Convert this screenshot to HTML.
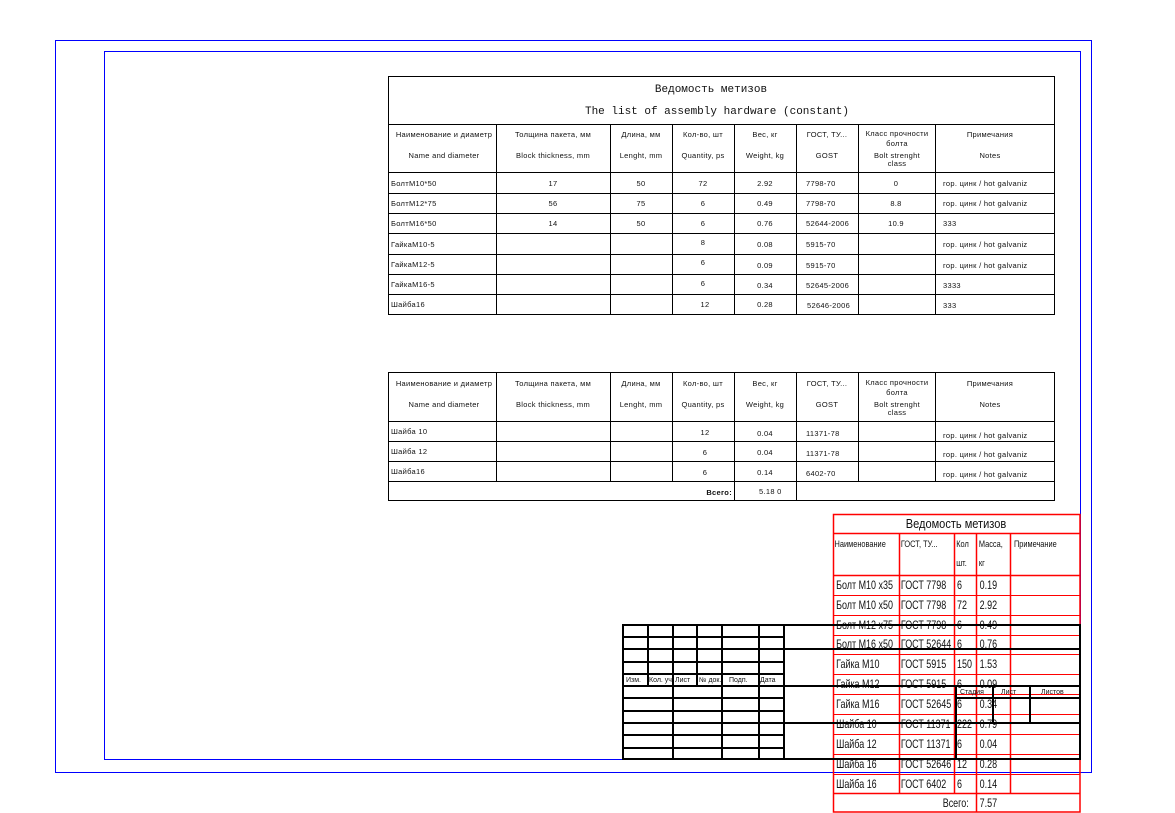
<!DOCTYPE html>
<html><head><meta charset="utf-8"><style>
html,body{margin:0;padding:0;background:#fff;}
svg{display:block}
text{font-family:"Liberation Sans","DejaVu Sans",sans-serif;}
.s{font-size:7.5px;fill:#111;letter-spacing:0.3px}
.r{font-size:10.5px;fill:#111}
.m{font-family:"Liberation Mono",monospace;font-size:11px;fill:#111}
</style></head><body>
<svg width="1175" height="813" viewBox="0 0 1175 813" xmlns="http://www.w3.org/2000/svg">
<rect x="0" y="0" width="1175" height="813" fill="#fff"/>
<rect x="55.5" y="40.5" width="1036" height="732" fill="none" stroke="#0000ff" stroke-width="1"/>
<rect x="104.5" y="51.5" width="976" height="708" fill="none" stroke="#0000ff" stroke-width="1"/>

<g stroke="#000" stroke-width="1" fill="none">
<rect x="388.5" y="76.5" width="666" height="238"/>
<line x1="388" y1="124.5" x2="1055" y2="124.5"/>
<line x1="388" y1="172.5" x2="1055" y2="172.5"/>
<line x1="388" y1="193.5" x2="1055" y2="193.5"/>
<line x1="388" y1="213.5" x2="1055" y2="213.5"/>
<line x1="388" y1="233.5" x2="1055" y2="233.5"/>
<line x1="388" y1="254.5" x2="1055" y2="254.5"/>
<line x1="388" y1="274.5" x2="1055" y2="274.5"/>
<line x1="388" y1="294.5" x2="1055" y2="294.5"/>
<line x1="496.5" y1="124" x2="496.5" y2="314"/>
<line x1="610.5" y1="124" x2="610.5" y2="314"/>
<line x1="672.5" y1="124" x2="672.5" y2="314"/>
<line x1="734.5" y1="124" x2="734.5" y2="314"/>
<line x1="796.5" y1="124" x2="796.5" y2="314"/>
<line x1="858.5" y1="124" x2="858.5" y2="314"/>
<line x1="935.5" y1="124" x2="935.5" y2="314"/>
</g>
<text class="m" x="711" y="92" text-anchor="middle">Ведомость метизов</text>
<text class="m" x="717" y="114" text-anchor="middle">The list of assembly hardware (constant)</text>
<g class="s" text-anchor="middle">
<text x="444" y="137">Наименование и диаметр</text><text x="444" y="158">Name and diameter</text>
<text x="553" y="137">Толщина пакета, мм</text><text x="553" y="158">Block thickness, mm</text>
<text x="641" y="137">Длина, мм</text><text x="641" y="158">Lenght, mm</text>
<text x="703" y="137">Кол-во, шт</text><text x="703" y="158">Quantity, ps</text>
<text x="765" y="137">Вес, кг</text><text x="765" y="158">Weight, kg</text>
<text x="827" y="137">ГОСТ, ТУ...</text><text x="827" y="158">GOST</text>
<text x="897" y="136">Класс прочности</text><text x="897" y="146">болта</text><text x="897" y="158">Bolt strenght</text><text x="897" y="166">class</text>
<text x="990" y="137">Примечания</text><text x="990" y="158">Notes</text>
</g>
<g class="s">
<text x="391" y="186">БолтМ10*50</text><text x="391" y="206">БолтМ12*75</text><text x="391" y="226">БолтМ16*50</text>
<text x="391" y="247">ГайкаМ10-5</text><text x="391" y="267">ГайкаМ12-5</text><text x="391" y="287">ГайкаМ16-5</text><text x="391" y="307">Шайба16</text>
<text x="806" y="186">7798-70</text><text x="806" y="206">7798-70</text><text x="806" y="226">52644-2006</text>
<text x="806" y="247">5915-70</text><text x="806" y="268">5915-70</text><text x="806" y="288">52645-2006</text><text x="807" y="308">52646-2006</text>
<text x="943" y="186">гор. цинк / hot galvaniz</text><text x="943" y="206">гор. цинк / hot galvaniz</text><text x="943" y="226">333</text>
<text x="943" y="247">гор. цинк / hot galvaniz</text><text x="943" y="268">гор. цинк / hot galvaniz</text><text x="943" y="288">3333</text><text x="943" y="308">333</text>
</g>
<g class="s" text-anchor="middle">
<text x="553" y="186">17</text><text x="553" y="206">56</text><text x="553" y="226">14</text>
<text x="641" y="186">50</text><text x="641" y="206">75</text><text x="641" y="226">50</text>
<text x="703" y="186">72</text><text x="703" y="206">6</text><text x="703" y="226">6</text><text x="703" y="245">8</text><text x="703" y="265">6</text><text x="703" y="286">6</text><text x="705" y="307">12</text>
<text x="765" y="186">2.92</text><text x="765" y="206">0.49</text><text x="765" y="226">0.76</text><text x="765" y="247">0.08</text><text x="765" y="268">0.09</text><text x="765" y="288">0.34</text><text x="765" y="307">0.28</text>
<text x="896" y="186">0</text><text x="896" y="206">8.8</text><text x="896" y="226">10.9</text>
</g>

<g stroke="#000" stroke-width="1" fill="none">
<rect x="388.5" y="372.5" width="666" height="128"/>
<line x1="388" y1="421.5" x2="1055" y2="421.5"/>
<line x1="388" y1="441.5" x2="1055" y2="441.5"/>
<line x1="388" y1="461.5" x2="1055" y2="461.5"/>
<line x1="388" y1="481.5" x2="1055" y2="481.5"/>
<line x1="496.5" y1="372" x2="496.5" y2="481"/>
<line x1="610.5" y1="372" x2="610.5" y2="481"/>
<line x1="672.5" y1="372" x2="672.5" y2="481"/>
<line x1="734.5" y1="372" x2="734.5" y2="500"/>
<line x1="796.5" y1="372" x2="796.5" y2="500"/>
<line x1="858.5" y1="372" x2="858.5" y2="481"/>
<line x1="935.5" y1="372" x2="935.5" y2="481"/>
</g>
<g class="s" text-anchor="middle">
<text x="444" y="386">Наименование и диаметр</text><text x="444" y="407">Name and diameter</text>
<text x="553" y="386">Толщина пакета, мм</text><text x="553" y="407">Block thickness, mm</text>
<text x="641" y="386">Длина, мм</text><text x="641" y="407">Lenght, mm</text>
<text x="703" y="386">Кол-во, шт</text><text x="703" y="407">Quantity, ps</text>
<text x="765" y="386">Вес, кг</text><text x="765" y="407">Weight, kg</text>
<text x="827" y="386">ГОСТ, ТУ...</text><text x="827" y="407">GOST</text>
<text x="897" y="385">Класс прочности</text><text x="897" y="395">болта</text><text x="897" y="407">Bolt strenght</text><text x="897" y="415">class</text>
<text x="990" y="386">Примечания</text><text x="990" y="407">Notes</text>
<text x="705" y="435">12</text><text x="705" y="455">6</text><text x="705" y="475">6</text>
<text x="765" y="436">0.04</text><text x="765" y="455">0.04</text><text x="765" y="475">0.14</text>
</g>
<g class="s">
<text x="391" y="434">Шайба 10</text><text x="391" y="454">Шайба 12</text><text x="391" y="474">Шайба16</text>
<text x="806" y="436">11371-78</text><text x="806" y="456">11371-78</text><text x="806" y="476">6402-70</text>
<text x="943" y="438">гор. цинк / hot galvaniz</text><text x="943" y="457">гор. цинк / hot galvaniz</text><text x="943" y="477">гор. цинк / hot galvaniz</text>
<text x="732" y="495" text-anchor="end" font-weight="bold">Всего:</text><text x="759" y="494">5.18  0</text>
</g>

<!-- RED TABLE -->
<g stroke="#ff0000" stroke-width="1.5" fill="none">
<rect x="833.5" y="514.5" width="246.5" height="297.5"/>
<line x1="833" y1="533.5" x2="1080" y2="533.5"/>
<line x1="833" y1="575.5" x2="1080" y2="575.5"/>
<line x1="833" y1="793.5" x2="1080" y2="793.5"/>
<line x1="899.5" y1="533" x2="899.5" y2="793"/>
<line x1="954.5" y1="533" x2="954.5" y2="793"/>
<line x1="976.5" y1="533" x2="976.5" y2="812"/>
<line x1="1010.5" y1="533" x2="1010.5" y2="793"/>
</g>
<g stroke="#ff0000" stroke-width="1" fill="none">
<line x1="833" y1="595.5" x2="1080" y2="595.5"/>
<line x1="833" y1="615.5" x2="1080" y2="615.5"/>
<line x1="833" y1="635.5" x2="1080" y2="635.5"/>
<line x1="833" y1="654.5" x2="1080" y2="654.5"/>
<line x1="833" y1="674.5" x2="1080" y2="674.5"/>
<line x1="833" y1="694.5" x2="1080" y2="694.5"/>
<line x1="833" y1="714.5" x2="1080" y2="714.5"/>
<line x1="833" y1="734.5" x2="1080" y2="734.5"/>
<line x1="833" y1="754.5" x2="1080" y2="754.5"/>
<line x1="833" y1="774.5" x2="1080" y2="774.5"/>
</g>
<text x="956" y="528" text-anchor="middle" style="font-size:13px;fill:#111" transform="translate(956 0) scale(0.85 1) translate(-956 0)">Ведомость метизов</text>
<g transform="translate(833 0) scale(0.78 1) translate(-833 0)">
<g class="r" style="font-size:9.5px">
<text x="835" y="547">Наименование</text><text x="920" y="547">ГОСТ, ТУ...</text><text x="991" y="547">Кол</text><text x="991" y="566">шт.</text><text x="1020" y="547">Масса,</text><text x="1020" y="566">кг</text><text x="1065" y="547">Примечание</text>
</g>
<g class="r" style="font-size:11.5px">
<text x="837" y="589">Болт М10 x35</text><text x="920" y="589">ГОСТ 7798</text><text x="992" y="589">6</text><text x="1021" y="589">0.19</text>
<text x="837" y="609">Болт М10 x50</text><text x="920" y="609">ГОСТ 7798</text><text x="992" y="609">72</text><text x="1021" y="609">2.92</text>
<text x="837" y="629">Болт М12 x75</text><text x="920" y="629">ГОСТ 7798</text><text x="992" y="629">6</text><text x="1021" y="629">0.49</text>
<text x="837" y="648">Болт М16 x50</text><text x="920" y="648">ГОСТ 52644</text><text x="992" y="648">6</text><text x="1021" y="648">0.76</text>
<text x="837" y="668">Гайка М10</text><text x="920" y="668">ГОСТ 5915</text><text x="992" y="668">150</text><text x="1021" y="668">1.53</text>
<text x="837" y="688">Гайка М12</text><text x="920" y="688">ГОСТ 5915</text><text x="992" y="688">6</text><text x="1021" y="688">0.09</text>
<text x="837" y="708">Гайка М16</text><text x="920" y="708">ГОСТ 52645</text><text x="992" y="708">6</text><text x="1021" y="708">0.34</text>
<text x="837" y="728">Шайба 10</text><text x="920" y="728">ГОСТ 11371</text><text x="992" y="728">222</text><text x="1021" y="728">0.79</text>
<text x="837" y="748">Шайба 12</text><text x="920" y="748">ГОСТ 11371</text><text x="992" y="748">6</text><text x="1021" y="748">0.04</text>
<text x="837" y="768">Шайба 16</text><text x="920" y="768">ГОСТ 52646</text><text x="992" y="768">12</text><text x="1021" y="768">0.28</text>
<text x="837" y="788">Шайба 16</text><text x="920" y="788">ГОСТ 6402</text><text x="992" y="788">6</text><text x="1021" y="788">0.14</text>
<text x="1007" y="807" text-anchor="end">Всего:</text><text x="1021" y="807">7.57</text>
</g>
</g>

<!-- BLACK TITLE BLOCK -->
<g stroke="#000" stroke-width="2" fill="none">
<rect x="623" y="625" width="457" height="134"/>
<line x1="623" y1="637" x2="784" y2="637"/>
<line x1="623" y1="649" x2="1080" y2="649"/>
<line x1="623" y1="662" x2="784" y2="662"/>
<line x1="623" y1="674" x2="784" y2="674"/>
<line x1="623" y1="686" x2="1080" y2="686"/>
<line x1="623" y1="698" x2="784" y2="698"/>
<line x1="956" y1="698" x2="1080" y2="698"/>
<line x1="623" y1="711" x2="784" y2="711"/>
<line x1="623" y1="723" x2="1080" y2="723"/>
<line x1="623" y1="735" x2="784" y2="735"/>
<line x1="623" y1="748" x2="784" y2="748"/>
<line x1="648" y1="625" x2="648" y2="686"/>
<line x1="697" y1="625" x2="697" y2="686"/>
<line x1="673" y1="625" x2="673" y2="759"/>
<line x1="722" y1="625" x2="722" y2="759"/>
<line x1="759" y1="625" x2="759" y2="759"/>
<line x1="784" y1="625" x2="784" y2="759"/>
<line x1="956" y1="686" x2="956" y2="759"/>
<line x1="993" y1="686" x2="993" y2="723"/>
<line x1="1030" y1="686" x2="1030" y2="723"/>
</g>
<g class="s" style="font-size:7px;letter-spacing:0">
<text x="626" y="682">Изм.</text><text x="649" y="682">Кол. уч</text><text x="675" y="682">Лист</text><text x="699" y="682">№ док.</text><text x="729" y="682">Подп.</text><text x="760" y="682">Дата</text>
<text x="960" y="694">Стадия</text><text x="1001" y="694">Лист</text><text x="1041" y="694">Листов</text>
</g>
</svg>
</body></html>
